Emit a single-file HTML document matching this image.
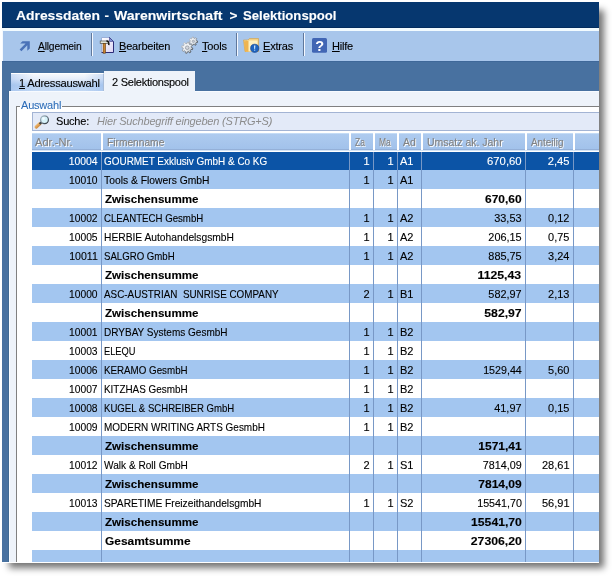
<!DOCTYPE html>
<html><head><meta charset="utf-8">
<style>
*{margin:0;padding:0;box-sizing:border-box}
html,body{width:613px;height:577px;overflow:hidden;background:#fff}
body{position:relative;font-family:"Liberation Sans",sans-serif;font-size:11px;color:#000;-webkit-text-stroke:0.12px}
div,span,svg{position:absolute}
#shadow{left:9px;top:10px;width:595px;height:558px;background:rgba(0,0,0,0.55);filter:blur(3.5px)}
#win{left:1px;top:1px;width:598px;height:562px;background:#fff}
#wc{left:0;top:0;width:599px;height:562px;overflow:hidden;opacity:0.999}
#title{left:2px;top:2px;width:597px;height:26px;background:#06376f;border-bottom:1px solid #032c5e}
.tt{top:7px;font-size:13.5px;font-weight:bold;color:#fff;white-space:nowrap;line-height:18px;transform-origin:0 0}
#tsep{left:2px;top:28px;width:597px;height:3px;background:#f2fbff}
#tbl{left:2px;top:31px;width:1px;height:30px;background:#f4f9ff}
#toolbar{left:3px;top:31px;width:596px;height:30px;background:#a8c6eb}
.tb{top:37px;line-height:18px;white-space:nowrap;color:#000;letter-spacing:-0.2px}
.tb u{text-decoration:underline;text-underline-offset:1px}
.sep1{top:33px;width:1px;height:23px;background:#60789c}
.sep2{top:33px;width:1px;height:23px;background:#f4f8ff}
#mid{left:2px;top:61px;width:597px;height:502px;background:#4871a0;border-top:1px solid #3f6899}
#panel{left:9px;top:91px;width:590px;height:472px;background:#eef3fa;border-left:1px solid #f8fbff;border-top:1px solid #f8fbff}
#pdark{left:8px;top:91px;width:1px;height:472px;background:#416a94}
#tab1{left:11px;top:73px;width:93px;height:18px;background:linear-gradient(to right,rgba(120,165,230,0.3),rgba(120,165,230,0) 25%,rgba(120,165,230,0) 80%,rgba(120,165,230,0.3)),linear-gradient(#f6f9fd 0%,#e6eefa 30%,#bad3f2 65%,#c2d8f4 100%);border-top:1px solid #fff;border-right:1px solid #a8bcd8}
#tab2{left:104px;top:71px;width:91px;height:21px;background:#eef3fa}
.tabt{top:76px;line-height:14px;white-space:nowrap;letter-spacing:-0.25px}
#grp{left:16px;top:106px;width:583px;height:457px;border-left:1px solid #808080;background:#fff}
.gl{top:106px;height:1px;background:#808080}
#grplbl{left:21px;top:98px;color:#2b6cb8;line-height:14px;letter-spacing:-0.2px;white-space:nowrap;-webkit-text-stroke:0.05px}
#search{left:32px;top:112px;width:567px;height:19px;background:#e3eaf8;border:1px solid #a3b4d4;border-right:none}
#stxt{left:56px;top:114px;line-height:14px;white-space:nowrap;letter-spacing:-0.2px}
#shint{left:97px;top:114px;line-height:14px;white-space:nowrap;font-style:italic;color:#8c8c8c;letter-spacing:-0.2px;-webkit-text-stroke:0}
#hdr{left:32px;top:133px;width:567px;height:19px;background:#fff}
#hline{left:32px;top:150px;width:567px;height:1px;background:#d4e4f6}
.hc{top:0;height:17px;background:linear-gradient(#c4dcf6 0,#c4dcf6 1px,#aecbef 1px,#a2c2eb 100%);border-bottom:1px solid #94b0d8}
.hc span{left:4px;top:2px;line-height:14px;color:#828282;text-shadow:1px 1px 0 #fff;white-space:nowrap;transform-origin:0 0}
.row{left:32px;width:567px;height:19px}
.row.S{background:#0c54a6;color:#fff}
.row.B{background:#a3c6f0}
.row.W{background:#fff}
.c{top:1px;height:19px;line-height:19px;white-space:nowrap;transform-origin:0 0}
.c.r{transform-origin:100% 0}
.c.b{font-weight:bold}
#rows{left:0;top:0;width:613px;height:577px}

.vl{top:152px;width:1px;height:411px;background:#7898c6}
</style></head><body>
<div id="shadow"></div>
<div id="win"></div>
<div id="wc">
<div id="title"></div>
<div class="tt" style="left:15.8px;transform:scaleX(1.028)">Adressdaten</div>
<div class="tt" style="left:104.6px">-</div>
<div class="tt" style="left:114.2px;transform:scaleX(1.038)">Warenwirtschaft</div>
<div class="tt" style="left:229.6px">&gt;</div>
<div class="tt" style="left:243px;transform:scaleX(0.973)">Selektionspool</div>
<div id="tsep"></div>
<div id="tbl"></div>
<div id="toolbar"></div>
<!-- icons -->
<svg style="left:16px;top:36px" width="18" height="18" viewBox="0 0 18 18"><path d="M4.2 7.5 L6.5 5.2 L13.8 5.2 L13.8 12.5 L11.3 14.8 L11.3 9.3 L5.4 15.2 L3.6 13.4 L9.6 7.5 Z" fill="#4a72b8"/></svg>
<div class="tb" style="left:38px;transform:scaleX(0.935);transform-origin:0 0"><u>A</u>llgemein</div>
<div class="sep1" style="left:91px"></div><div class="sep2" style="left:92px"></div>
<svg style="left:96px;top:34px" width="22" height="22" viewBox="0 0 22 22">
<defs><linearGradient id="pg" x1="0" y1="0" x2="1" y2="1"><stop offset="0" stop-color="#ffffff"/><stop offset="1" stop-color="#dcd4f4"/></linearGradient></defs>
<path d="M5.5 3.5 H13.5 L17.5 7.5 V18.5 H5.5 Z" fill="url(#pg)"/>
<path d="M5.5 18.5 V3.5 H13.5" fill="none" stroke="#9cb0d8" stroke-width="1"/>
<path d="M13.5 3.5 L17.5 7.5 V18.5 H5.5" fill="none" stroke="#2c2c78" stroke-width="1"/>
<path d="M13.5 3.5 L17.5 7.5 H13.5 Z" fill="#8090d0" stroke="#3a3a88" stroke-width="0.6"/>
<rect x="4.2" y="7" width="8.2" height="2.4" fill="#e2e6da" stroke="#505050" stroke-width="0.7"/>
<path d="M10.4 7.1 C12.4 7.1 13.1 8.6 12.8 11.2" fill="none" stroke="#111" stroke-width="1.5"/>
<rect x="7.1" y="9.4" width="2.4" height="9.8" fill="#cc8430" stroke="#5a3810" stroke-width="0.6"/>
</svg>
<div class="tb" style="left:119px"><u>B</u>earbeiten</div>
<svg style="left:178px;top:34px" width="22" height="22" viewBox="0 0 22 22">
<defs><linearGradient id="gg" x1="0" y1="0" x2="1" y2="1"><stop offset="0" stop-color="#ffffff"/><stop offset="0.55" stop-color="#e8ecf0"/><stop offset="1" stop-color="#a0a8b0"/></linearGradient><linearGradient id="gs" x1="0" y1="0" x2="1" y2="1"><stop offset="0" stop-color="#c8ccd2"/><stop offset="0.5" stop-color="#8a9098"/><stop offset="1" stop-color="#30363c"/></linearGradient></defs>
<path d="M19.59 6.96 L19.43 8.49 L18.28 8.46 L17.69 9.43 L18.24 10.44 L16.95 11.27 L16.26 10.35 L15.12 10.50 L14.68 11.55 L13.22 11.07 L13.51 9.95 L12.69 9.15 L11.59 9.47 L11.06 8.02 L12.11 7.55 L12.22 6.42 L11.29 5.75 L12.09 4.44 L13.11 4.96 L14.07 4.34 L14.01 3.20 L15.54 3.01 L15.76 4.13 L16.85 4.50 L17.71 3.74 L18.80 4.81 L18.06 5.69 L18.45 6.76 Z" fill="url(#gg)" stroke="url(#gs)" stroke-width="0.9"/>
<path d="M14.79 13.94 L14.45 15.66 L13.01 15.47 L12.27 16.56 L12.99 17.83 L11.53 18.79 L10.64 17.65 L9.35 17.90 L8.96 19.29 L7.24 18.95 L7.43 17.51 L6.34 16.77 L5.07 17.49 L4.11 16.03 L5.25 15.14 L5.00 13.85 L3.61 13.46 L3.95 11.74 L5.39 11.93 L6.13 10.84 L5.41 9.57 L6.87 8.61 L7.76 9.75 L9.05 9.50 L9.44 8.11 L11.16 8.45 L10.97 9.89 L12.06 10.63 L13.33 9.91 L14.29 11.37 L13.15 12.26 L13.40 13.55 Z" fill="url(#gg)" stroke="url(#gs)" stroke-width="0.9"/>
<circle cx="9.2" cy="13.7" r="1.8" fill="#d4d8de" stroke="#7a828c" stroke-width="0.6"/>
<circle cx="15.3" cy="7.3" r="1.2" fill="#c4cad2" stroke="#8a929c" stroke-width="0.5"/>
</svg>
<div class="tb" style="left:202px"><u>T</u>ools</div>
<div class="sep1" style="left:236px"></div><div class="sep2" style="left:237px"></div>
<svg style="left:240px;top:34px" width="22" height="22" viewBox="0 0 22 22">
<path d="M3.5 6 H8 L9.5 4.5 H18.5 V17.5 H5 Z" fill="#f4d080" stroke="#d0a048" stroke-width="0.6"/>
<path d="M7 6.5 H17.5 V17.5 H6 Z" fill="#fdf0c0"/>
<path d="M4 7.5 L8.5 6.5 V17.8 H5 Z" fill="#eeb450"/>
<circle cx="14.7" cy="14.3" r="4.1" fill="#1e64c0" stroke="#0e3c88" stroke-width="0.6"/>
<path d="M14 11.6 H15.4 L15.1 15 H14.3 Z" fill="#d8f0ff"/>
<rect x="14.2" y="15.6" width="1" height="1.1" fill="#d8f0ff"/>
</svg>
<div class="tb" style="left:263px"><u>E</u>xtras</div>
<div class="sep1" style="left:303px"></div><div class="sep2" style="left:304px"></div>
<svg style="left:309px;top:35px" width="22" height="22" viewBox="0 0 22 22">
<rect x="3" y="3" width="15" height="14.8" rx="1.5" fill="#4166b4"/>
<text x="10.7" y="15.8" font-family="Liberation Sans" font-weight="bold" font-size="14.5" fill="#fff" text-anchor="middle">?</text>
</svg>
<div class="tb" style="left:332px"><u>H</u>ilfe</div>

<div id="mid"></div>
<div id="panel"></div>
<div id="pdark"></div>
<div id="tab1"></div>
<div class="tabt" style="left:19px;transform:scaleX(1.017);transform-origin:0 0"><u>1</u> Adressauswahl</div>
<div id="tab2"></div>
<div class="tabt" style="left:112px;top:75px">2 Selektionspool</div>

<div id="grp"></div>
<div class="gl" style="left:16px;width:4px"></div>
<div class="gl" style="left:62px;width:537px"></div>
<div id="grplbl">Auswahl</div>
<div id="search"></div>
<svg style="left:32px;top:112px" width="20" height="20" viewBox="0 0 20 20">
<defs><linearGradient id="ms" x1="0" y1="0" x2="1" y2="1"><stop offset="0" stop-color="#b0c4d0"/><stop offset="0.5" stop-color="#6a7884"/><stop offset="1" stop-color="#20282e"/></linearGradient>
<linearGradient id="mh" x1="0" y1="0" x2="1" y2="1"><stop offset="0" stop-color="#f4c888"/><stop offset="1" stop-color="#c87a28"/></linearGradient></defs>
<path d="M4.2 15 L8 11.6" stroke="url(#mh)" stroke-width="3.3" stroke-linecap="round"/>
<path d="M7.6 12 L9.6 10.2" stroke="#38424a" stroke-width="2.2"/>
<circle cx="12.5" cy="7.8" r="3.9" fill="#d6f2fa" stroke="url(#ms)" stroke-width="1.2"/>
<circle cx="11.5" cy="6.6" r="1.3" fill="#f4fcff"/>
</svg>
<div id="stxt">Suche:</div>
<div id="shint">Hier Suchbegriff eingeben (STRG+S)</div>
<div id="hdr"><div class="hc" style="left:0px;width:69px"><span style="left:3.2px;transform:scaleX(1.0073)">Adr.-Nr.</span></div><div class="hc" style="left:71px;width:246px"><span style="left:4px;transform:scaleX(0.9282)">Firmenname</span></div><div class="hc" style="left:319px;width:22px"><span style="left:4px;transform:scaleX(0.7726)">Za</span></div><div class="hc" style="left:343px;width:22px"><span style="left:4px;transform:scaleX(0.7734)">Ma</span></div><div class="hc" style="left:367px;width:22px"><span style="left:4px;transform:scaleX(0.9447)">Ad</span></div><div class="hc" style="left:391px;width:102px"><span style="left:4px;transform:scaleX(0.9524)">Umsatz ak. Jahr</span></div><div class="hc" style="left:495px;width:46px"><span style="left:4px;transform:scaleX(0.8982)">Anteilig</span></div><div class="hc" style="left:543px;width:24px"></div></div>
<div id="hline"></div>
<div id="rows">
<div class="row S" style="top:152px;height:18px"><div style="left:0;top:-1px;width:567px;height:19px;overflow:hidden"><span class="c r" style="right:501.5px;transform:scaleX(0.9452);">10004</span><span class="c" style="left:72px;transform:scaleX(0.9032);">GOURMET Exklusiv GmbH &amp; Co KG</span><span class="c r" style="right:229.5px;">1</span><span class="c r" style="right:205.5px;">1</span><span class="c" style="left:368px;">A1</span><span class="c r" style="right:77.5px;transform:scaleX(1.0290);">670,60</span><span class="c r" style="right:29.5px;transform:scaleX(1.0145);">2,45</span></div></div>
<div class="row B" style="top:170px"><span class="c r" style="right:501.5px;transform:scaleX(0.9353);">10010</span><span class="c" style="left:72px;transform:scaleX(0.9376);">Tools &amp; Flowers GmbH</span><span class="c r" style="right:229.5px;">1</span><span class="c r" style="right:205.5px;">1</span><span class="c" style="left:368px;">A1</span></div>
<div class="row W" style="top:189px"><span class="c b" style="left:73px;transform:scaleX(1.0551);">Zwischensumme</span><span class="c b r" style="right:77.5px;transform:scaleX(1.0887);">670,60</span></div>
<div class="row B" style="top:208px"><span class="c r" style="right:501.5px;transform:scaleX(0.9353);">10002</span><span class="c" style="left:72px;transform:scaleX(0.8777);">CLEANTECH GesmbH</span><span class="c r" style="right:229.5px;">1</span><span class="c r" style="right:205.5px;">1</span><span class="c" style="left:368px;">A2</span><span class="c r" style="right:77.5px;transform:scaleX(0.9924);">33,53</span><span class="c r" style="right:29.5px;transform:scaleX(0.9957);">0,12</span></div>
<div class="row W" style="top:227px"><span class="c r" style="right:501.5px;transform:scaleX(0.9353);">10005</span><span class="c" style="left:72px;transform:scaleX(0.9324);">HERBIE AutohandelsgsmbH</span><span class="c r" style="right:229.5px;">1</span><span class="c r" style="right:205.5px;">1</span><span class="c" style="left:368px;">A2</span><span class="c r" style="right:77.5px;transform:scaleX(0.9903);">206,15</span><span class="c r" style="right:29.5px;transform:scaleX(0.9957);">0,75</span></div>
<div class="row B" style="top:246px"><span class="c r" style="right:501.5px;transform:scaleX(0.9611);">10011</span><span class="c" style="left:72px;transform:scaleX(0.8756);">SALGRO GmbH</span><span class="c r" style="right:229.5px;">1</span><span class="c r" style="right:205.5px;">1</span><span class="c" style="left:368px;">A2</span><span class="c r" style="right:77.5px;transform:scaleX(0.9903);">885,75</span><span class="c r" style="right:29.5px;transform:scaleX(0.9957);">3,24</span></div>
<div class="row W" style="top:265px"><span class="c b" style="left:73px;transform:scaleX(1.0551);">Zwischensumme</span><span class="c b r" style="right:77.5px;transform:scaleX(1.1143);">1125,43</span></div>
<div class="row B" style="top:284px"><span class="c r" style="right:501.5px;transform:scaleX(0.9353);">10000</span><span class="c" style="left:72px;transform:scaleX(0.8965);">ASC-AUSTRIAN  SUNRISE COMPANY</span><span class="c r" style="right:229.5px;">2</span><span class="c r" style="right:205.5px;">1</span><span class="c" style="left:368px;">B1</span><span class="c r" style="right:77.5px;transform:scaleX(0.9903);">582,97</span><span class="c r" style="right:29.5px;transform:scaleX(0.9957);">2,13</span></div>
<div class="row W" style="top:303px"><span class="c b" style="left:73px;transform:scaleX(1.0551);">Zwischensumme</span><span class="c b r" style="right:77.5px;transform:scaleX(1.1096);">582,97</span></div>
<div class="row B" style="top:322px"><span class="c r" style="right:501.5px;transform:scaleX(0.9353);">10001</span><span class="c" style="left:72px;transform:scaleX(0.9106);">DRYBAY Systems GesmbH</span><span class="c r" style="right:229.5px;">1</span><span class="c r" style="right:205.5px;">1</span><span class="c" style="left:368px;">B2</span></div>
<div class="row W" style="top:341px"><span class="c r" style="right:501.5px;transform:scaleX(0.9353);">10003</span><span class="c" style="left:72px;transform:scaleX(0.8434);">ELEQU</span><span class="c r" style="right:229.5px;">1</span><span class="c r" style="right:205.5px;">1</span><span class="c" style="left:368px;">B2</span></div>
<div class="row B" style="top:360px"><span class="c r" style="right:501.5px;transform:scaleX(0.9353);">10006</span><span class="c" style="left:72px;transform:scaleX(0.8887);">KERAMO GesmbH</span><span class="c r" style="right:229.5px;">1</span><span class="c r" style="right:205.5px;">1</span><span class="c" style="left:368px;">B2</span><span class="c r" style="right:77.5px;transform:scaleX(0.9711);">1529,44</span><span class="c r" style="right:29.5px;transform:scaleX(0.9957);">5,60</span></div>
<div class="row W" style="top:379px"><span class="c r" style="right:501.5px;transform:scaleX(0.9353);">10007</span><span class="c" style="left:72px;transform:scaleX(0.9004);">KITZHAS GesmbH</span><span class="c r" style="right:229.5px;">1</span><span class="c r" style="right:205.5px;">1</span><span class="c" style="left:368px;">B2</span></div>
<div class="row B" style="top:398px"><span class="c r" style="right:501.5px;transform:scaleX(0.9353);">10008</span><span class="c" style="left:72px;transform:scaleX(0.8724);">KUGEL &amp; SCHREIBER GmbH</span><span class="c r" style="right:229.5px;">1</span><span class="c r" style="right:205.5px;">1</span><span class="c" style="left:368px;">B2</span><span class="c r" style="right:77.5px;transform:scaleX(0.9924);">41,97</span><span class="c r" style="right:29.5px;transform:scaleX(0.9957);">0,15</span></div>
<div class="row W" style="top:417px"><span class="c r" style="right:501.5px;transform:scaleX(0.9353);">10009</span><span class="c" style="left:72px;transform:scaleX(0.9057);">MODERN WRITING ARTS GesmbH</span><span class="c r" style="right:229.5px;">1</span><span class="c r" style="right:205.5px;">1</span><span class="c" style="left:368px;">B2</span></div>
<div class="row B" style="top:436px"><span class="c b" style="left:73px;transform:scaleX(1.0551);">Zwischensumme</span><span class="c b r" style="right:77.5px;transform:scaleX(1.0947);">1571,41</span></div>
<div class="row W" style="top:455px"><span class="c r" style="right:501.5px;transform:scaleX(0.9353);">10012</span><span class="c" style="left:72px;transform:scaleX(0.9187);">Walk &amp; Roll GmbH</span><span class="c r" style="right:229.5px;">2</span><span class="c r" style="right:205.5px;">1</span><span class="c" style="left:368px;">S1</span><span class="c r" style="right:77.5px;transform:scaleX(0.9787);">7814,09</span><span class="c r" style="right:29.5px;">28,61</span></div>
<div class="row B" style="top:474px"><span class="c b" style="left:73px;transform:scaleX(1.0551);">Zwischensumme</span><span class="c b r" style="right:77.5px;transform:scaleX(1.0947);">7814,09</span></div>
<div class="row W" style="top:493px"><span class="c r" style="right:501.5px;transform:scaleX(0.9353);">10013</span><span class="c" style="left:72px;transform:scaleX(0.9276);">SPARETIME FreizeithandelsgmbH</span><span class="c r" style="right:229.5px;">1</span><span class="c r" style="right:205.5px;">1</span><span class="c" style="left:368px;">S2</span><span class="c r" style="right:77.5px;transform:scaleX(0.9746);">15541,70</span><span class="c r" style="right:29.5px;">56,91</span></div>
<div class="row B" style="top:512px"><span class="c b" style="left:73px;transform:scaleX(1.0551);">Zwischensumme</span><span class="c b r" style="right:77.5px;transform:scaleX(1.1079);">15541,70</span></div>
<div class="row W" style="top:531px"><span class="c b" style="left:73px;transform:scaleX(1.0844);">Gesamtsumme</span><span class="c b r" style="right:77.5px;transform:scaleX(1.1145);">27306,20</span></div>
<div class="row B" style="top:550px"></div>
</div>
<div class="vl" style="left:101px"></div><div class="vl" style="left:349px"></div><div class="vl" style="left:373px"></div><div class="vl" style="left:397px"></div><div class="vl" style="left:421px"></div><div class="vl" style="left:525px"></div><div class="vl" style="left:573px"></div>
</div>
</body></html>
